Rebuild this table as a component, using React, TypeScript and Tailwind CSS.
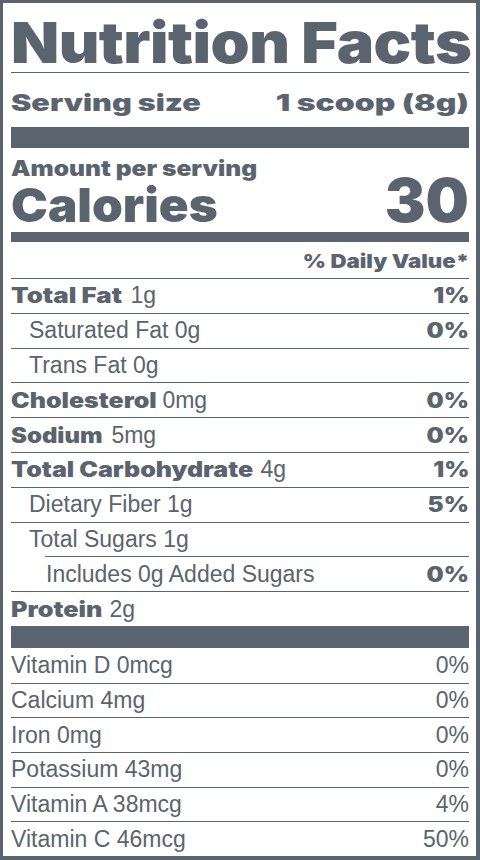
import React from "react";

const HEAVY = "font-['Inter',sans-serif] font-black";
const REG = "font-['Liberation_Sans',Arial,sans-serif] font-normal";

type Row = {
  label: string;
  amount: string;
  dv?: string;
  // heavy label: box width + stretch, both read off the printed label
  box?: string;
  indent?: 0 | 1 | 2;
};

const rows: Row[] = [
  { label: "Total Fat", amount: "1g", dv: "1%", box: "w-[113px] scale-x-[1.23]" },
  { label: "Saturated Fat", amount: "0g", dv: "0%", indent: 1 },
  { label: "Trans Fat", amount: "0g", indent: 1 },
  { label: "Cholesterol", amount: "0mg", dv: "0%", box: "w-[145px] scale-x-[1.19]" },
  { label: "Sodium", amount: "5mg", dv: "0%", box: "w-[94px] scale-x-[1.14]" },
  { label: "Total Carbohydrate", amount: "4g", dv: "1%", box: "w-[243px] scale-x-[1.19]" },
  { label: "Dietary Fiber", amount: "1g", dv: "5%", indent: 1 },
  { label: "Total Sugars", amount: "1g", indent: 1 },
  { label: "Includes 0g Added Sugars", amount: "", dv: "0%", indent: 2 },
  { label: "Protein", amount: "2g", box: "w-[92px] scale-x-[1.2]" },
];

const vitamins = [
  ["Vitamin D 0mcg", "0%"],
  ["Calcium 4mg", "0%"],
  ["Iron 0mg", "0%"],
  ["Potassium 43mg", "0%"],
  ["Vitamin A 38mcg", "4%"],
  ["Vitamin C 46mcg", "50%"],
];

function NutrientRow({ row }: { row: Row }) {
  const pad = row.indent === 1 ? "pl-[18px]" : row.indent === 2 ? "ml-[34px] pl-[1px]" : "";
  const [w, sc] = (row.box ?? "").split(" ");
  return (
    <div className={`h-[34.8px] flex items-center justify-between border-t border-[#5a646e] ${pad}`}>
      <div className="flex items-center whitespace-nowrap leading-none">
        {row.box ? (
          <>
            <span className={`inline-block ${w}`}>
              <span className={`inline-block origin-left ${sc} ${HEAVY} text-[21px]`}>{row.label}</span>
            </span>
            <span className={`${REG} text-[23px]`}>&nbsp;{row.amount}</span>
          </>
        ) : (
          <span className={`${REG} text-[23px]`}>
            {row.label}
            {row.amount ? ` ${row.amount}` : ""}
          </span>
        )}
      </div>
      {row.dv && (
        <span className={`inline-block origin-right scale-x-[1.15] ${HEAVY} text-[21px] leading-none`}>
          {row.dv}
        </span>
      )}
    </div>
  );
}

export default function App() {
  return (
    <div className="w-[480px] h-[860px] overflow-hidden bg-white text-[#5a646e] border-t-[3px] border-l-[3px] border-r-4 border-b-4 border-[#5a646e] pl-[8px] pr-[7px] flex flex-col">
      {/* title */}
      <div className="h-[70px] shrink-0 border-b border-[#5a646e] flex items-end pb-[1px]">
        <h1
          className={`${HEAVY} text-[57px] leading-none whitespace-nowrap origin-left scale-x-[1.1] tracking-[-0.5px]`}
        >
          Nutrition Facts
        </h1>
      </div>

      {/* serving */}
      <div className={`h-[54px] shrink-0 flex items-center justify-between pt-[6px] ${HEAVY} text-[23px] leading-none`}>
        <span className="origin-left scale-x-[1.33]">Serving size</span>
        <span className="origin-right scale-x-[1.39]">1 scoop (8g)</span>
      </div>

      <div className="h-[21px] shrink-0 bg-[#5a646e]" />

      {/* calories */}
      <div className="h-[84px] shrink-0 flex flex-col pt-[10px]">
        <div className={`w-fit ${HEAVY} text-[21px] leading-[21px] origin-left scale-x-[1.17] whitespace-nowrap`}>
          Amount per serving
        </div>
        <div className="flex items-baseline justify-between">
          <span className={`${HEAVY} text-[47px] leading-[36px] origin-left scale-x-[1.05]`}>Calories</span>
          <span className={`${HEAVY} text-[61px] leading-[42px]`}>30</span>
        </div>
      </div>

      <div className="h-[10px] shrink-0 bg-[#5a646e]" />

      <div className={`h-[36px] shrink-0 flex items-center justify-end pt-[2px] ${HEAVY} text-[19px] leading-none`}>
        <span className="origin-right scale-x-[1.17]">% Daily Value*</span>
      </div>

      {rows.map((r) => (
        <NutrientRow key={r.label} row={r} />
      ))}

      <div className="h-[22px] shrink-0 bg-[#5a646e]" />

      {vitamins.map(([label, dv], i) => (
        <div
          key={label}
          className={`h-[34.67px] flex items-center justify-between ${REG} text-[23px] leading-none ${
            i > 0 ? "border-t border-[#5a646e]" : ""
          }`}
        >
          <span>{label}</span>
          <span>{dv}</span>
        </div>
      ))}
    </div>
  );
}
